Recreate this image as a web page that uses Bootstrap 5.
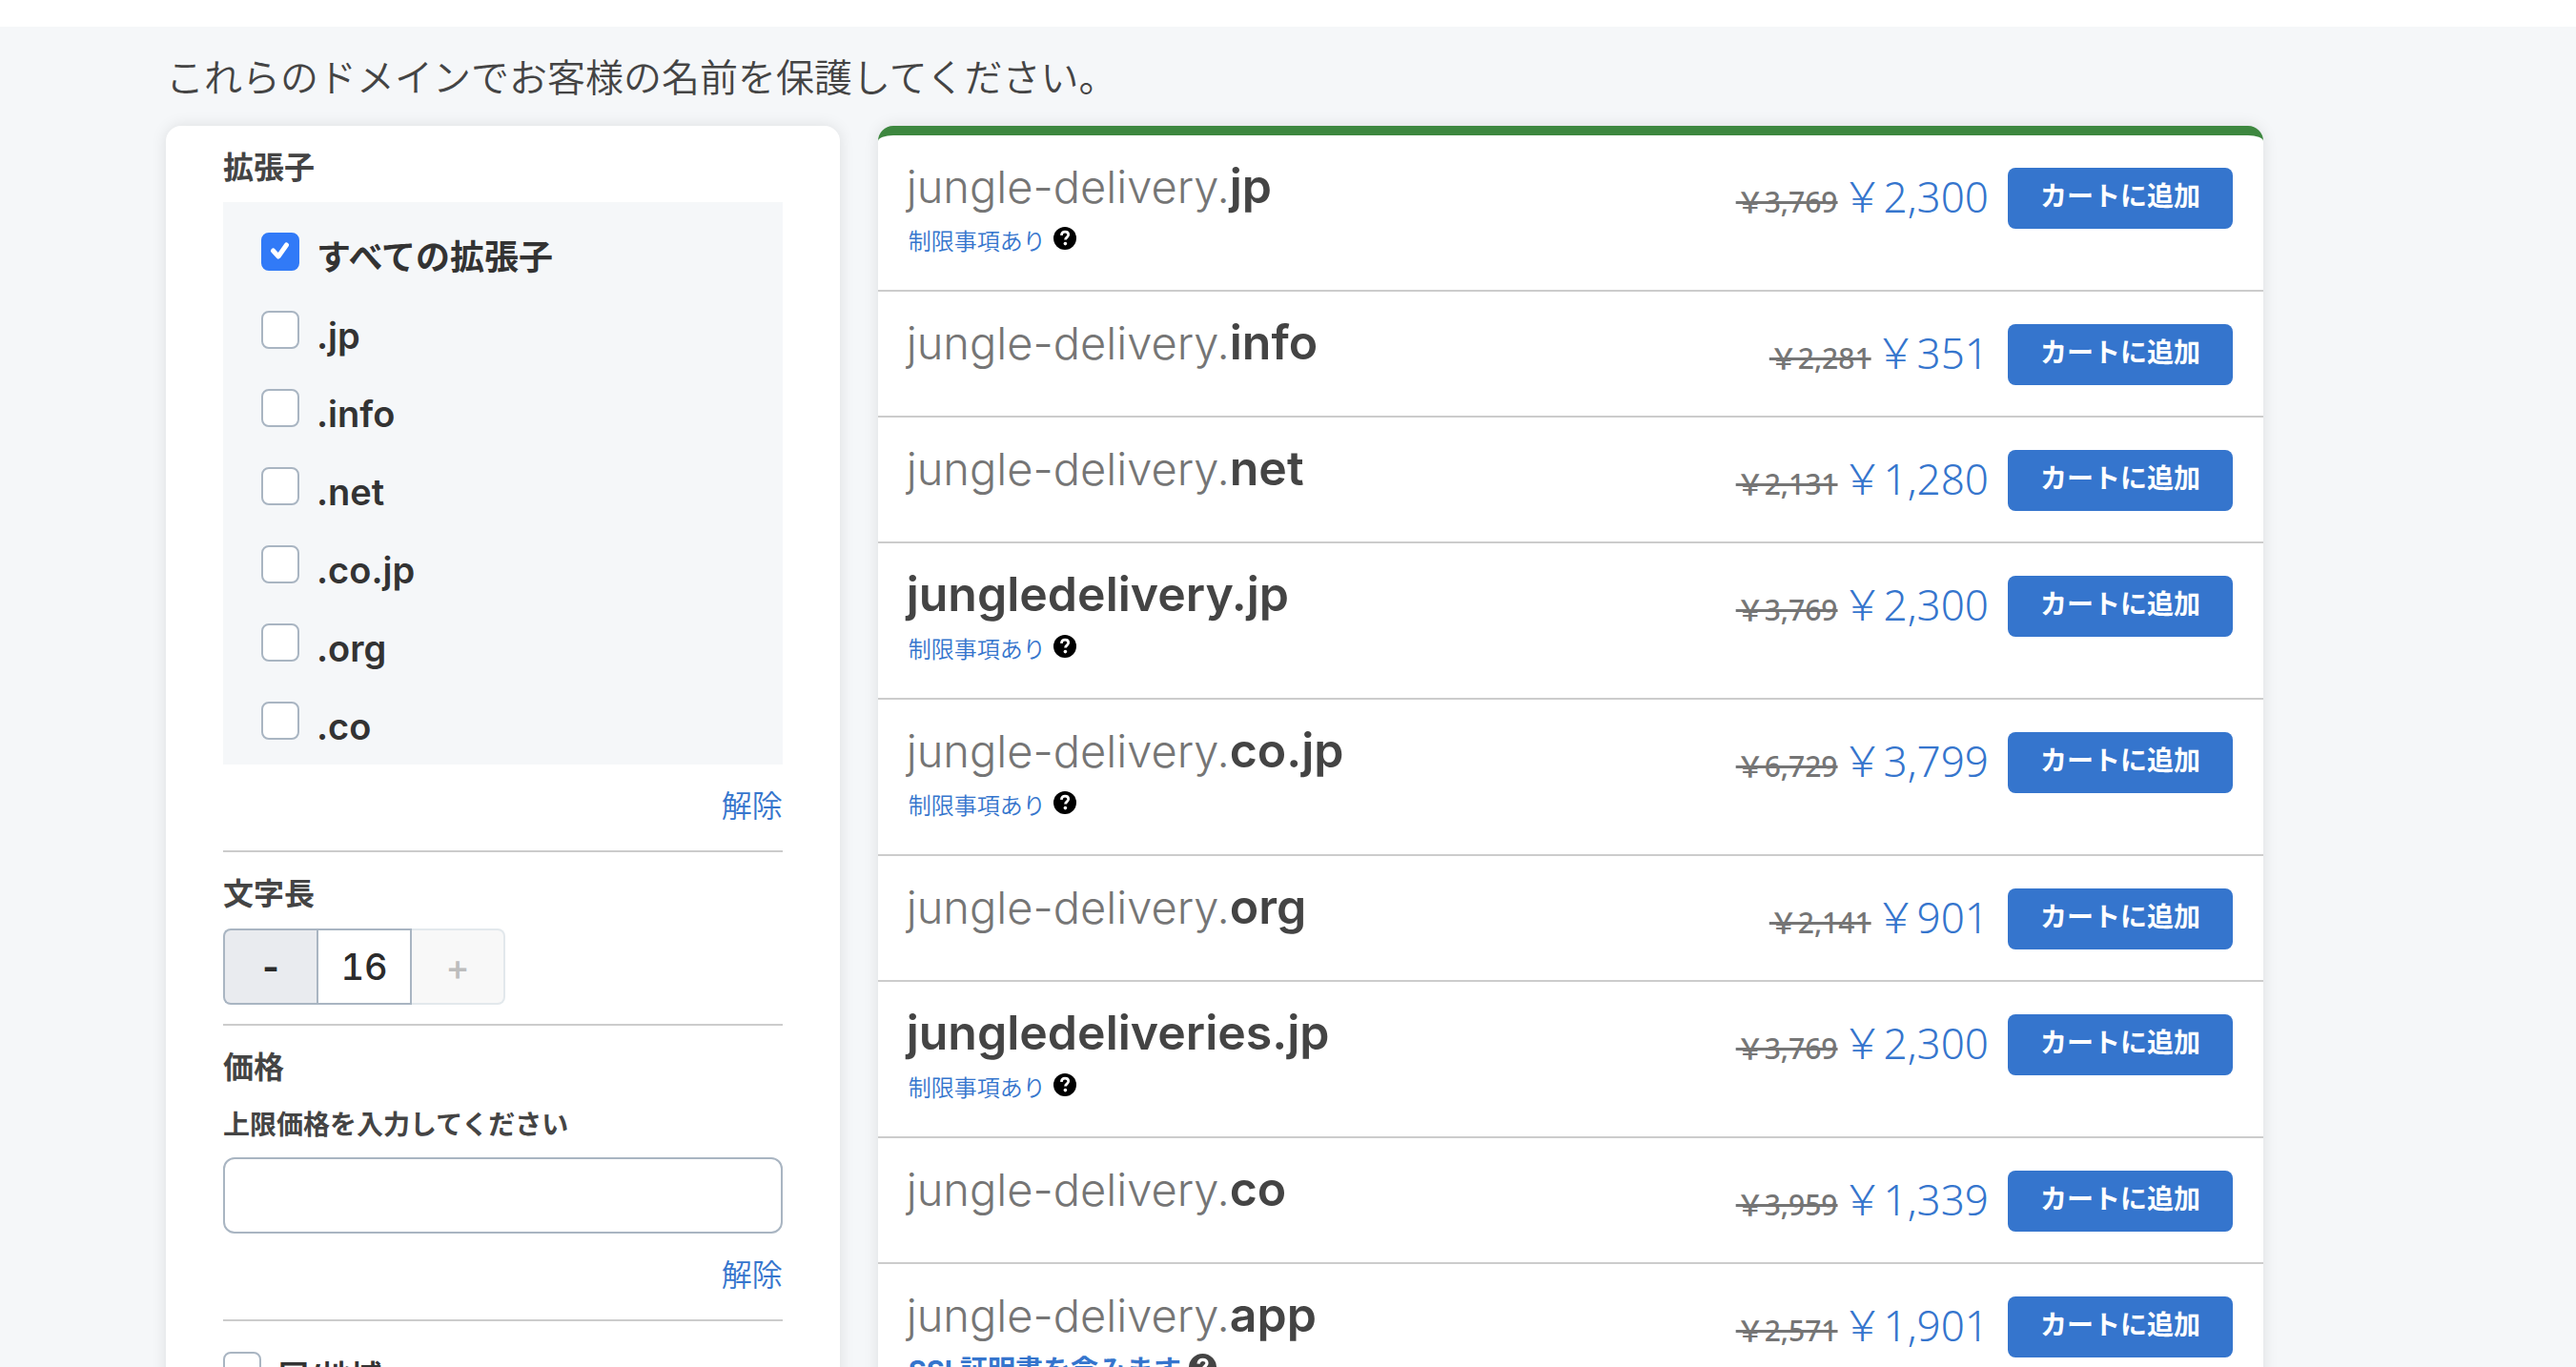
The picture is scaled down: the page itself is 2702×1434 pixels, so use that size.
<!DOCTYPE html>
<html lang="ja">
<head>
<meta charset="utf-8">
<meta name="viewport" content="width=device-width, initial-scale=1">
<title>ドメイン検索</title>
<link href="https://cdn.jsdelivr.net/npm/bootstrap@5.3.0/dist/css/bootstrap.min.css" rel="stylesheet">
<style>
  body { background: #f5f7f9; color: #444; font-family: Inter, "Noto Sans CJK JP", sans-serif; font-size: 32px; line-height: 48px; }
  .topbar { height: 28px; }
  .page { max-width: 2240px; margin-left: 154px; padding: 0 20px; }
  .page .row { --bs-gutter-x: 40px; }
  .page-title { font-size: 40px; line-height: 60px; font-weight: 350; padding: 24px 0 20px; }
  .panel { background: #fff; border-radius: 16px; box-shadow: 0 0 16px rgba(0, 0, 0, .1); }
  .filters { padding: 20px 60px 120px; }
  .filter-name { font-size: 32px; line-height: 48px; font-weight: 700; margin: 0; }
  .divider + .filter-name { padding-top: 20px; }
  .link-blue { color: #3575cd; font-weight: 350; text-decoration: none; }
  .choices { background: #f5f7f9; margin-top: 12px; padding: 32px 40px 26px; gap: 42px; }
  .choice { gap: 18px; height: 40px; color: #333; font-weight: 600; font-size: 38px; }
  .choice label { line-height: 40px; padding-top: 6px; }
  .choice .label-ja { font-size: 36px; font-weight: 700; }
  .region { margin-top: 32px; }
  .region label { font-size: 32px; font-weight: 700; }
  .tick { appearance: none; width: 40px; height: 40px; margin: 0; flex: none; background: #fff; border: 2px solid #a9b5c2; border-radius: 8px; }
  .tick:checked { border-color: #317af7; background: #317af7 url("data:image/svg+xml,%3Csvg xmlns='http://www.w3.org/2000/svg' viewBox='0 0 36 36'%3E%3Cpath d='M10.500 17l5.500 6 8.500-12' fill='none' stroke='%23fff' stroke-width='5' stroke-linecap='round' stroke-linejoin='round'/%3E%3C/svg%3E") center / 36px no-repeat; }
  .clear { padding: 20px 0 22px; }
  .divider { margin: 0; border-top: 2px solid #ccc; opacity: 1; }
  .stepper { width: 296px; height: 80px; margin: 12px 0 20px; }
  .stepper > * { flex: 1 1 0; min-width: 0; padding: 0; text-align: center; border: 2px solid #a9b5c2; color: #2b2b2b; font-weight: 500; font-size: 38px; line-height: 76px; font-variant-numeric: tabular-nums; }
  .stepper .step-down { background: #e9ebef; border-radius: 8px 0 0 8px; border-right: 0; font-weight: 700; }
  .step-value { background: #fff; border-radius: 0; }
  .stepper .step-up { background: #f8f8f8; border-color: #e2e8ec; border-left: 0; border-radius: 0 8px 8px 0; color: #bdbdbd; }
  .field-name { font-size: 28px; line-height: 40px; font-weight: 700; margin: 16px 0 14px; }
  .price-box { height: 80px; border: 2px solid #a9b5c2; border-radius: 12px; }
  .results { overflow: hidden; border-top: 10px solid #3d873f; }
  .domain { min-height: 132px; padding: 26px 32px 28px; border-bottom: 2px solid #ccc; }
  .domain-name { font-size: 47px; line-height: 56px; font-weight: 300; color: #757575; margin: 0 0 0 -2px; }
  .domain-name b { font-size: 50px; line-height: 50px; font-weight: 600; color: #444; }
  .note { margin-top: 8px; gap: 8px; font-size: 24px; line-height: 44px; color: #000; }
  .note-ssl { font-size: 29px; color: #444; }
  .note-ssl .link-blue { font-weight: 700; }
  .note svg { width: 1em; height: 1em; margin-bottom: 8px; }
  .buy { height: 72px; padding-top: 8px; gap: 20px; }
  .cost { gap: 4px; line-height: 60px; font-family: "Noto Sans", "Noto Sans CJK JP", sans-serif; }
  .cost s { font-size: 30px; font-weight: 500; color: #757575; }
  .cost span { font-size: 44px; font-weight: 300; color: #3575cd; }
  .btn-cart { width: 236px; height: 64px; padding: 0 0 4px; font-size: 28px; font-weight: 700; border: 0; border-radius: 8px; background: #3575cd; color: #fff; }
</style>
</head>
<body>
<svg class="d-none" aria-hidden="true">
  <symbol id="help" viewBox="0 0 24 24">
    <circle cx="12" cy="12" r="12" fill="currentColor"/>
    <path d="M8.3 8.8c.3-2.400 1.800-3.600 3.800-3.600 2.100 0 3.600 1.300 3.600 3.100 0 2.500-3.200 2.700-3.200 5.300" fill="none" stroke="#fff" stroke-width="2.700"/>
    <circle cx="12.400" cy="17.600" r="1.800" fill="#fff"/>
  </symbol>
</svg>
<main class="vh-100 overflow-hidden">
  <div class="topbar bg-white"></div>
  <div class="container-fluid page">
    <h1 class="page-title mb-0">これらのドメインでお客様の名前を保護してください。</h1>
    <div class="row">
      <aside class="col-4">
        <form class="panel filters">
          <h2 class="filter-name">拡張子</h2>
          <div class="choices d-flex flex-column">
            <div class="choice d-flex"><input class="tick" type="checkbox" id="x-all" checked><label class="label-ja" for="x-all">すべての拡張子</label></div>
            <div class="choice d-flex"><input class="tick" type="checkbox" id="x-jp"><label for="x-jp">.jp</label></div>
            <div class="choice d-flex"><input class="tick" type="checkbox" id="x-info"><label for="x-info">.info</label></div>
            <div class="choice d-flex"><input class="tick" type="checkbox" id="x-net"><label for="x-net">.net</label></div>
            <div class="choice d-flex"><input class="tick" type="checkbox" id="x-cojp"><label for="x-cojp">.co.jp</label></div>
            <div class="choice d-flex"><input class="tick" type="checkbox" id="x-org"><label for="x-org">.org</label></div>
            <div class="choice d-flex"><input class="tick" type="checkbox" id="x-co"><label for="x-co">.co</label></div>
          </div>
          <div class="clear text-end"><a class="link-blue" href="#">解除</a></div>
          <hr class="divider">
          <h2 class="filter-name">文字長</h2>
          <div class="stepper d-flex">
            <button type="button" class="step-down">-</button>
            <input class="step-value" type="text" value="16" aria-label="文字長">
            <button type="button" class="step-up" disabled>+</button>
          </div>
          <hr class="divider">
          <h2 class="filter-name">価格</h2>
          <label class="field-name d-block" for="max-price">上限価格を入力してください</label>
          <input class="price-box form-control" type="text" id="max-price">
          <div class="clear text-end"><a class="link-blue" href="#">解除</a></div>
          <hr class="divider">
          <div class="choice region d-flex"><input class="tick" type="checkbox" id="region"><label for="region">国/地域</label></div>
        </form>
      </aside>
      <section class="col-8">
        <div class="panel results">
          <article class="domain d-flex justify-content-between align-items-start">
            <div><h3 class="domain-name">jungle-delivery.<b>jp</b></h3>
              <div class="note d-flex align-items-center"><a class="link-blue" href="#">制限事項あり</a><svg><use href="#help"/></svg></div></div>
            <div class="buy d-flex"><div class="cost d-flex align-items-baseline"><s>&#65509;3,769</s><span>&#65509;2,300</span></div><button class="btn btn-cart">カートに追加</button></div>
          </article>
          <article class="domain d-flex justify-content-between align-items-start">
            <div><h3 class="domain-name">jungle-delivery.<b>info</b></h3></div>
            <div class="buy d-flex"><div class="cost d-flex align-items-baseline"><s>&#65509;2,281</s><span>&#65509;351</span></div><button class="btn btn-cart">カートに追加</button></div>
          </article>
          <article class="domain d-flex justify-content-between align-items-start">
            <div><h3 class="domain-name">jungle-delivery.<b>net</b></h3></div>
            <div class="buy d-flex"><div class="cost d-flex align-items-baseline"><s>&#65509;2,131</s><span>&#65509;1,280</span></div><button class="btn btn-cart">カートに追加</button></div>
          </article>
          <article class="domain d-flex justify-content-between align-items-start">
            <div><h3 class="domain-name"><b>jungledelivery.jp</b></h3>
              <div class="note d-flex align-items-center"><a class="link-blue" href="#">制限事項あり</a><svg><use href="#help"/></svg></div></div>
            <div class="buy d-flex"><div class="cost d-flex align-items-baseline"><s>&#65509;3,769</s><span>&#65509;2,300</span></div><button class="btn btn-cart">カートに追加</button></div>
          </article>
          <article class="domain d-flex justify-content-between align-items-start">
            <div><h3 class="domain-name">jungle-delivery.<b>co.jp</b></h3>
              <div class="note d-flex align-items-center"><a class="link-blue" href="#">制限事項あり</a><svg><use href="#help"/></svg></div></div>
            <div class="buy d-flex"><div class="cost d-flex align-items-baseline"><s>&#65509;6,729</s><span>&#65509;3,799</span></div><button class="btn btn-cart">カートに追加</button></div>
          </article>
          <article class="domain d-flex justify-content-between align-items-start">
            <div><h3 class="domain-name">jungle-delivery.<b>org</b></h3></div>
            <div class="buy d-flex"><div class="cost d-flex align-items-baseline"><s>&#65509;2,141</s><span>&#65509;901</span></div><button class="btn btn-cart">カートに追加</button></div>
          </article>
          <article class="domain d-flex justify-content-between align-items-start">
            <div><h3 class="domain-name"><b>jungledeliveries.jp</b></h3>
              <div class="note d-flex align-items-center"><a class="link-blue" href="#">制限事項あり</a><svg><use href="#help"/></svg></div></div>
            <div class="buy d-flex"><div class="cost d-flex align-items-baseline"><s>&#65509;3,769</s><span>&#65509;2,300</span></div><button class="btn btn-cart">カートに追加</button></div>
          </article>
          <article class="domain d-flex justify-content-between align-items-start">
            <div><h3 class="domain-name">jungle-delivery.<b>co</b></h3></div>
            <div class="buy d-flex"><div class="cost d-flex align-items-baseline"><s>&#65509;3,959</s><span>&#65509;1,339</span></div><button class="btn btn-cart">カートに追加</button></div>
          </article>
          <article class="domain d-flex justify-content-between align-items-start">
            <div><h3 class="domain-name">jungle-delivery.<b>app</b></h3>
              <div class="note note-ssl d-flex align-items-center"><a class="link-blue" href="#">SSL証明書を含みます</a><svg><use href="#help"/></svg></div></div>
            <div class="buy d-flex"><div class="cost d-flex align-items-baseline"><s>&#65509;2,571</s><span>&#65509;1,901</span></div><button class="btn btn-cart">カートに追加</button></div>
          </article>
        </div>
      </section>
    </div>
  </div>
</main>
<script src="https://cdn.jsdelivr.net/npm/bootstrap@5.3.0/dist/js/bootstrap.bundle.min.js"></script>
</body>
</html>
